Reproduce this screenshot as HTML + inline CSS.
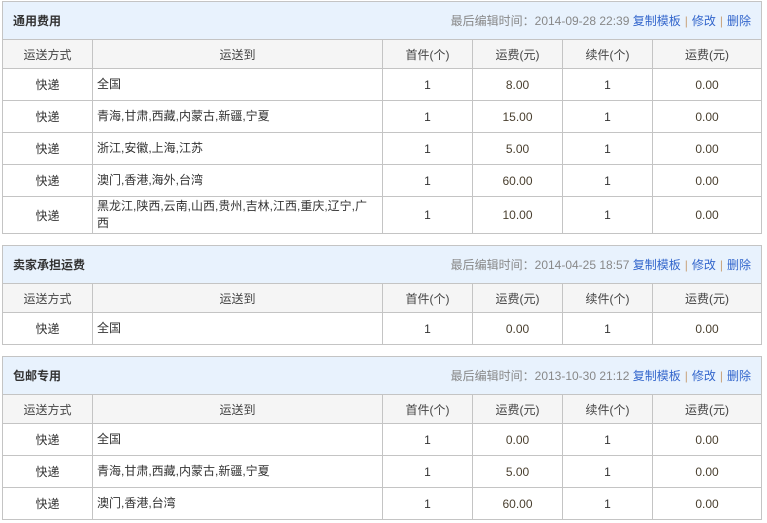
<!DOCTYPE html>
<html><head><meta charset="utf-8"><style>
body{margin:0;background:#fff;font-family:"Liberation Sans","Noto Sans CJK SC",sans-serif;font-size:12px;color:#333}
table{position:absolute;left:2px;border-collapse:collapse;table-layout:fixed;width:759px}
td,th{border:1px solid #c4c4c4;padding:0;text-align:center;font-weight:normal;box-sizing:border-box}
tr.h td{background:#e8f2fd;height:38px;text-align:left;padding:0 10px}
tr.h b{font-size:12px;color:#333}
tr.h span.r{float:right;color:#888}
tr.h a{color:#3366cc;text-decoration:none}
tr.h i{font-style:normal;color:#c9a27a;margin:0 4px}
th{background:#f5f5f5;height:29px;color:#444}
td.l{text-align:left;padding:0 4px;line-height:17px}
tr.d td{height:32px}
.n{color:#4a4030}
</style></head><body>
<table style="top:1px">
<colgroup><col style="width:90px"><col style="width:290px"><col style="width:90px"><col style="width:90px"><col style="width:90px"><col style="width:109px"></colgroup>
<tr class="h"><td colspan="6"><b>通用费用</b><span class="r">最后编辑时间：2014-09-28 22:39 <a>复制模板</a><i>|</i><a>修改</a><i>|</i><a>删除</a></span></td></tr>
<tr><th>运送方式</th><th>运送到</th><th>首件(个)</th><th>运费(元)</th><th>续件(个)</th><th>运费(元)</th></tr>
<tr class="d"><td>快递</td><td class="l">全国</td><td>1</td><td class="n">8.00</td><td>1</td><td class="n">0.00</td></tr>
<tr class="d"><td>快递</td><td class="l">青海,甘肃,西藏,内蒙古,新疆,宁夏</td><td>1</td><td class="n">15.00</td><td>1</td><td class="n">0.00</td></tr>
<tr class="d"><td>快递</td><td class="l">浙江,安徽,上海,江苏</td><td>1</td><td class="n">5.00</td><td>1</td><td class="n">0.00</td></tr>
<tr class="d"><td>快递</td><td class="l">澳门,香港,海外,台湾</td><td>1</td><td class="n">60.00</td><td>1</td><td class="n">0.00</td></tr>
<tr><td style="height:37px">快递</td><td class="l">黑龙江,陕西,云南,山西,贵州,吉林,江西,重庆,辽宁,广西</td><td>1</td><td class="n">10.00</td><td>1</td><td class="n">0.00</td></tr>
</table>
<table style="top:245px">
<colgroup><col style="width:90px"><col style="width:290px"><col style="width:90px"><col style="width:90px"><col style="width:90px"><col style="width:109px"></colgroup>
<tr class="h"><td colspan="6"><b>卖家承担运费</b><span class="r">最后编辑时间：2014-04-25 18:57 <a>复制模板</a><i>|</i><a>修改</a><i>|</i><a>删除</a></span></td></tr>
<tr><th>运送方式</th><th>运送到</th><th>首件(个)</th><th>运费(元)</th><th>续件(个)</th><th>运费(元)</th></tr>
<tr class="d"><td>快递</td><td class="l">全国</td><td>1</td><td class="n">0.00</td><td>1</td><td class="n">0.00</td></tr>
</table>
<table style="top:356px">
<colgroup><col style="width:90px"><col style="width:290px"><col style="width:90px"><col style="width:90px"><col style="width:90px"><col style="width:109px"></colgroup>
<tr class="h"><td colspan="6"><b>包邮专用</b><span class="r">最后编辑时间：2013-10-30 21:12 <a>复制模板</a><i>|</i><a>修改</a><i>|</i><a>删除</a></span></td></tr>
<tr><th>运送方式</th><th>运送到</th><th>首件(个)</th><th>运费(元)</th><th>续件(个)</th><th>运费(元)</th></tr>
<tr class="d"><td>快递</td><td class="l">全国</td><td>1</td><td class="n">0.00</td><td>1</td><td class="n">0.00</td></tr>
<tr class="d"><td>快递</td><td class="l">青海,甘肃,西藏,内蒙古,新疆,宁夏</td><td>1</td><td class="n">5.00</td><td>1</td><td class="n">0.00</td></tr>
<tr class="d"><td>快递</td><td class="l">澳门,香港,台湾</td><td>1</td><td class="n">60.00</td><td>1</td><td class="n">0.00</td></tr>
</table>
</body></html>
